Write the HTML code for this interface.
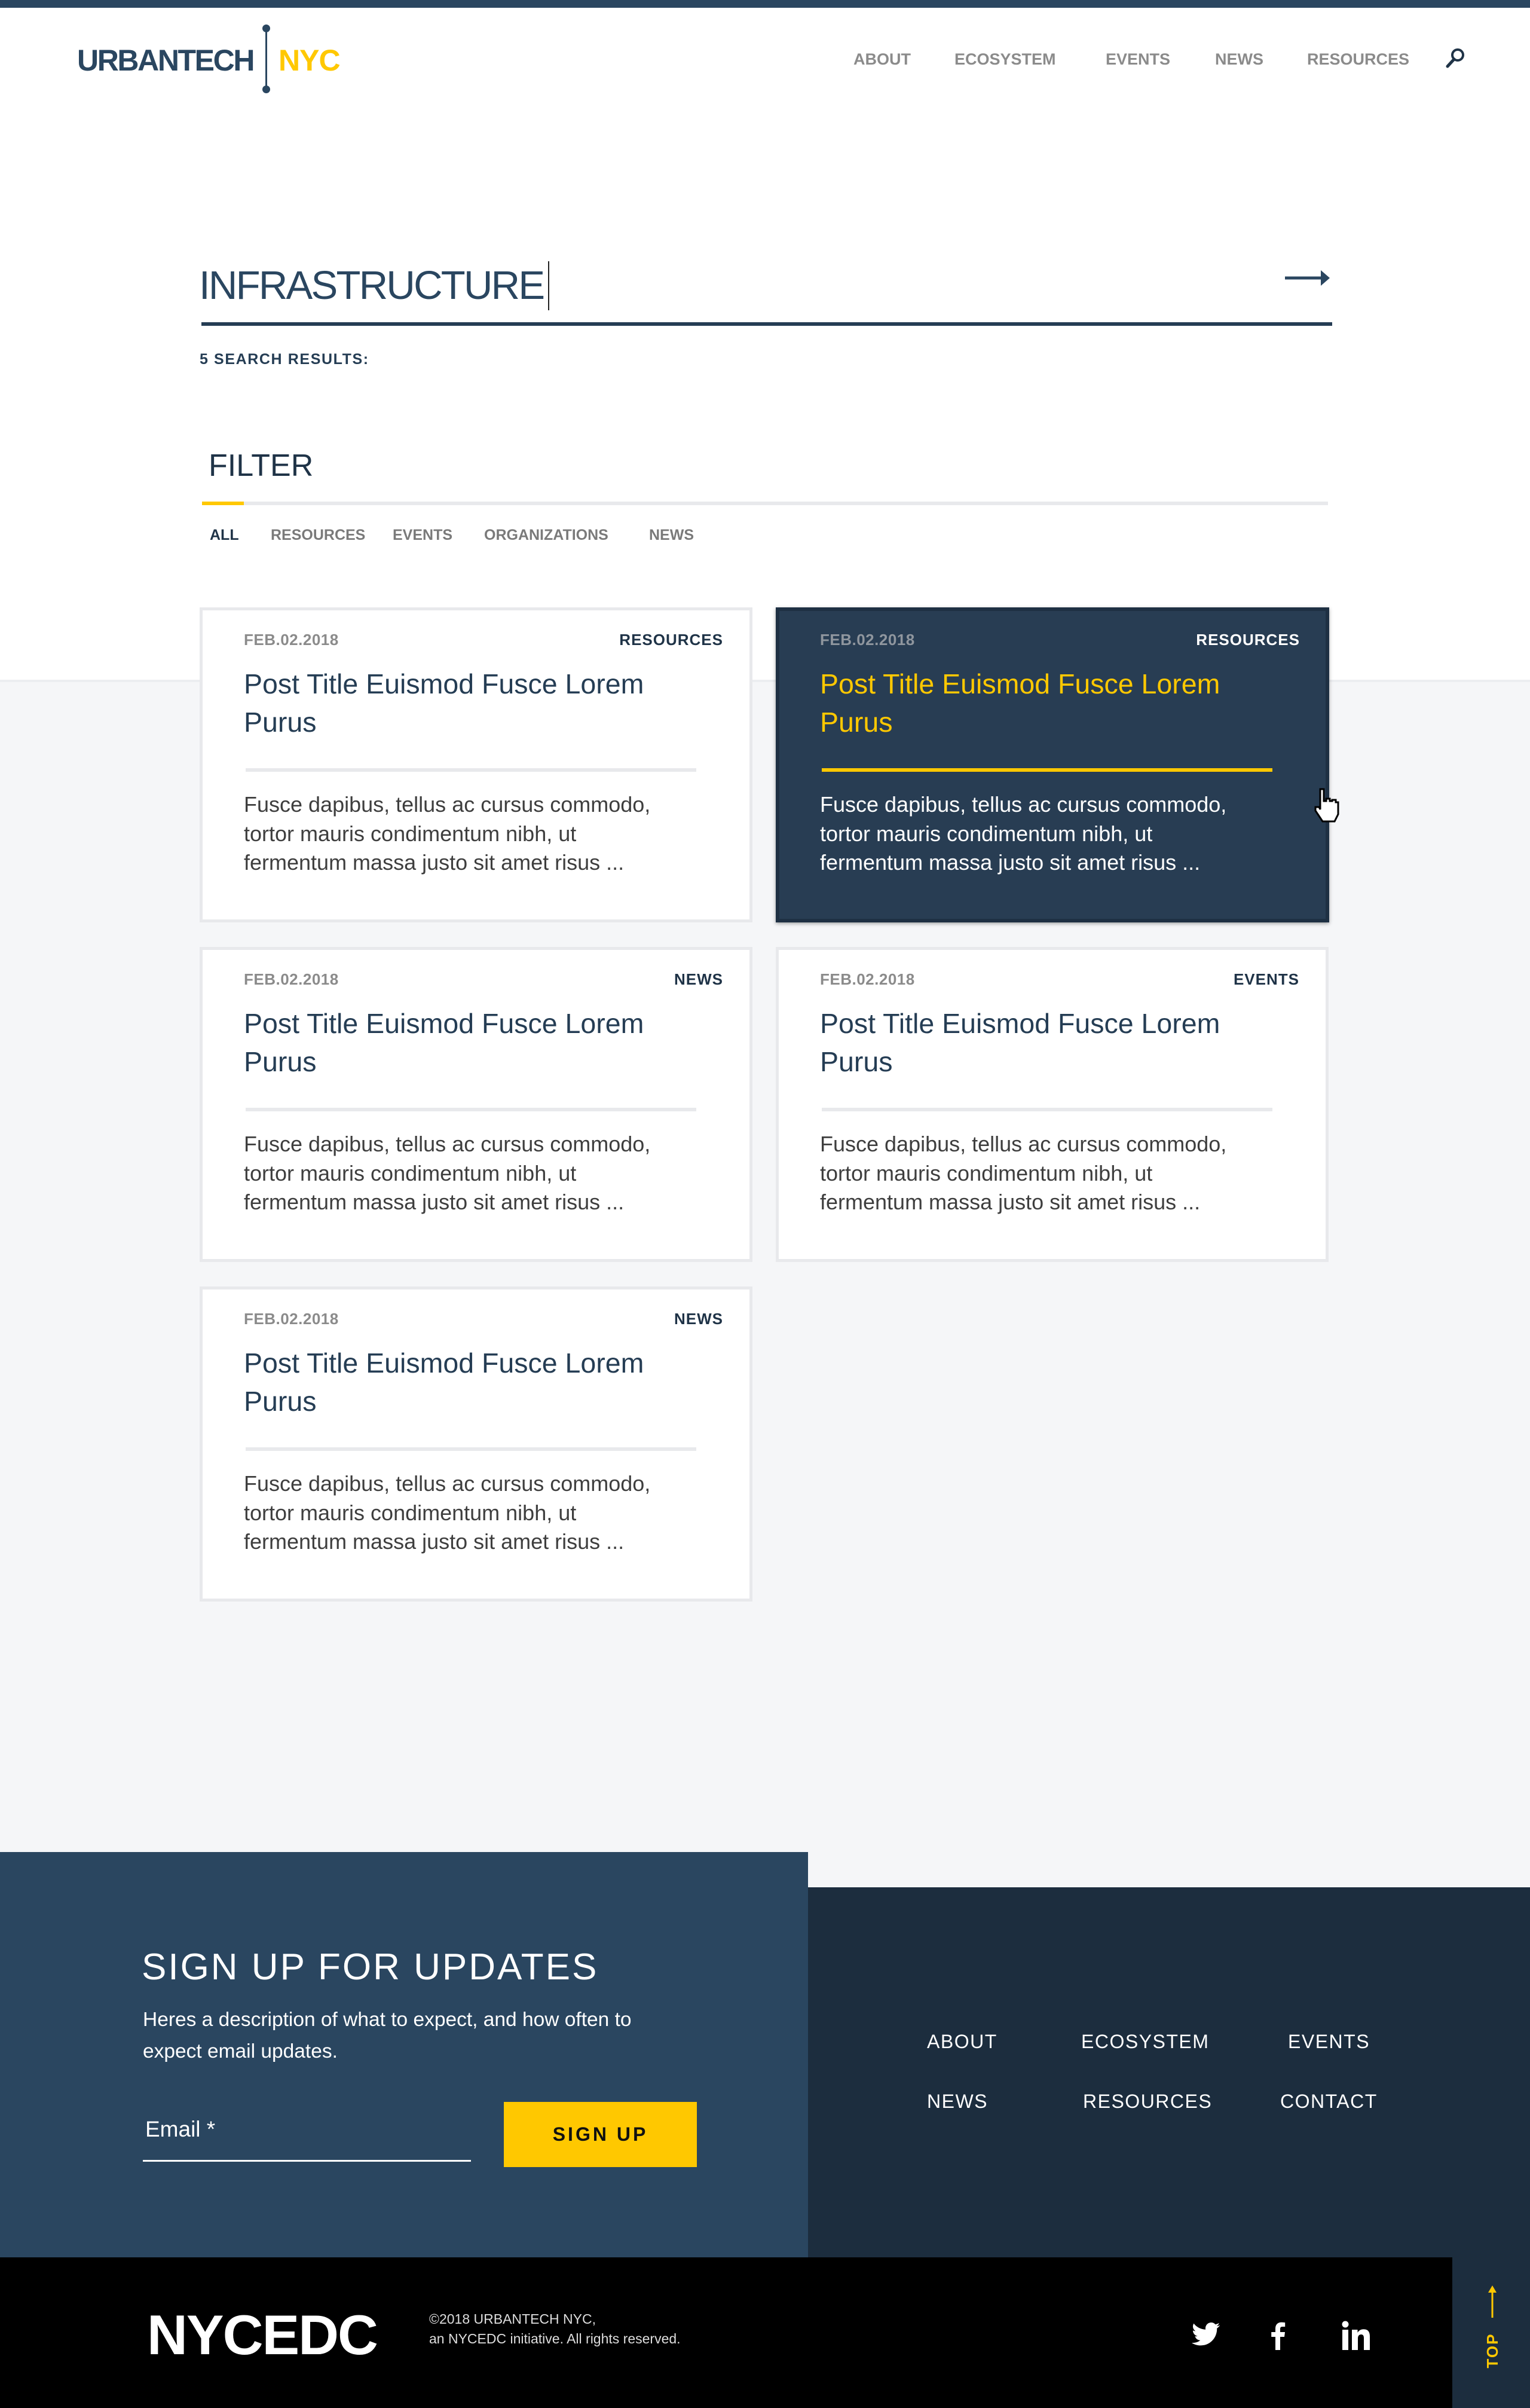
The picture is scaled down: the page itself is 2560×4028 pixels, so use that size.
<!DOCTYPE html>
<html><head><meta charset="utf-8">
<style>
*{margin:0;padding:0;box-sizing:border-box}
html,body{width:2560px;height:4028px;overflow:hidden}
body{position:relative;background:#fff;font-family:"Liberation Sans",Arial,sans-serif;color:#253d54}
.a{position:absolute;white-space:nowrap}
.nav{font-size:27px;font-weight:bold;color:#8b8b8b;top:84px}
.tab{font-size:25px;font-weight:bold;color:#7a7a7a;top:881px}
.card{position:absolute;width:925px;height:527px;background:#fff;border:5px solid #e8e9ec}
.card .d{position:absolute;left:69px;top:34px;font-size:26px;font-weight:bold;color:#8b8b8b;letter-spacing:0.5px}
.card .c{position:absolute;right:44px;top:34px;font-size:26px;font-weight:bold;color:#1f3347;letter-spacing:1px}
.card .t{position:absolute;left:69px;top:91px;font-size:46.5px;line-height:64px;color:#253d54;white-space:nowrap}
.card .l{position:absolute;left:72px;top:264px;width:754px;height:6px;background:#e8e9ec}
.card .b{position:absolute;left:69px;top:301px;font-size:36px;line-height:48.5px;color:#3e3e3e;white-space:nowrap}
.card.dk{background:#283d53;border:6px solid #1e3043;box-shadow:0 2px 6px rgba(0,0,0,.35)}
.card.dk .d{color:#8f969e}
.card.dk .c{color:#fff}
.card.dk .t{color:#ffc800}
.card.dk .l{background:#ffc800}
.card.dk .b{color:#fff}
.fl{font-size:32px;color:#fff;letter-spacing:1.5px}
</style></head><body>
<div class="a" style="left:0;top:0;width:2560px;height:13px;background:#2a4660"></div>
<!-- logo -->
<div class="a" style="left:129px;top:72px;font-size:50px;font-weight:bold;color:#2a4660;letter-spacing:-2.4px">URBANTECH</div>
<div class="a" style="left:444px;top:46px;width:3px;height:106px;background:#2a4660"></div>
<div class="a" style="left:439px;top:41px;width:13px;height:13px;border-radius:50%;background:#2a4660"></div>
<div class="a" style="left:439px;top:143px;width:13px;height:13px;border-radius:50%;background:#2a4660"></div>
<div class="a" style="left:466px;top:72px;font-size:50px;font-weight:bold;color:#ffc800;letter-spacing:-1px">NYC</div>
<!-- nav -->
<div class="a nav" style="left:1428px">ABOUT</div>
<div class="a nav" style="left:1597px">ECOSYSTEM</div>
<div class="a nav" style="left:1850px">EVENTS</div>
<div class="a nav" style="left:2033px">NEWS</div>
<div class="a nav" style="left:2187px">RESOURCES</div>
<svg class="a" style="left:2416px;top:78px" width="38" height="36" viewBox="0 0 38 36"><circle cx="23" cy="14" r="9" fill="none" stroke="#1f3347" stroke-width="4"/><line x1="17" y1="21" x2="6" y2="33" stroke="#1f3347" stroke-width="5" stroke-linecap="round"/></svg>
<!-- search -->
<div class="a" style="left:333px;top:439px;font-size:67px;color:#2a4660;letter-spacing:-2.7px">INFRASTRUCTURE</div>
<div class="a" style="left:917px;top:437px;width:2px;height:82px;background:#222"></div>
<svg class="a" style="left:2150px;top:450px" width="76" height="30" viewBox="0 0 76 30"><line x1="0" y1="15" x2="66" y2="15" stroke="#2a4660" stroke-width="5"/><path d="M60 2 L75 15 L60 28 Z" fill="#2a4660"/></svg>
<div class="a" style="left:337px;top:539px;width:1892px;height:6px;background:#253d54"></div>
<div class="a" style="left:334px;top:587px;font-size:25px;font-weight:bold;color:#253d54;letter-spacing:1.6px">5 SEARCH RESULTS:</div>
<!-- filter -->
<div class="a" style="left:349px;top:749px;font-size:52px;color:#1f3347">FILTER</div>
<div class="a" style="left:338px;top:839px;width:1884px;height:6px;background:#e8e9ec"></div>
<div class="a" style="left:338px;top:839px;width:70px;height:6px;background:#ffc800"></div>
<div class="a tab" style="left:351px;color:#1f3347">ALL</div>
<div class="a tab" style="left:453px">RESOURCES</div>
<div class="a tab" style="left:657px">EVENTS</div>
<div class="a tab" style="left:810px">ORGANIZATIONS</div>
<div class="a tab" style="left:1086px">NEWS</div>
<!-- gray bg -->
<div class="a" style="left:0;top:1137px;width:2560px;height:1961px;background:#f5f6f8;border-top:4px solid #eceef1"></div>
<div class="a" style="left:1352px;top:3098px;width:1208px;height:59px;background:#f5f6f8"></div>
<!-- cards -->
<div class="card" style="left:334px;top:1016px"><div class="d">FEB.02.2018</div><div class="c">RESOURCES</div><div class="t">Post Title Euismod Fusce Lorem<br>Purus</div><div class="l"></div><div class="b">Fusce dapibus, tellus ac cursus commodo,<br>tortor mauris condimentum nibh, ut<br>fermentum massa justo sit amet risus ...</div></div>
<div class="card dk" style="left:1298px;top:1016px;width:926px"><div class="d" style="left:68px;top:33px">FEB.02.2018</div><div class="c" style="right:43px;top:33px">RESOURCES</div><div class="t" style="left:68px;top:90px">Post Title Euismod Fusce Lorem<br>Purus</div><div class="l" style="left:71px;top:263px"></div><div class="b" style="left:68px;top:300px">Fusce dapibus, tellus ac cursus commodo,<br>tortor mauris condimentum nibh, ut<br>fermentum massa justo sit amet risus ...</div></div>
<div class="card" style="left:334px;top:1584px"><div class="d">FEB.02.2018</div><div class="c">NEWS</div><div class="t">Post Title Euismod Fusce Lorem<br>Purus</div><div class="l"></div><div class="b">Fusce dapibus, tellus ac cursus commodo,<br>tortor mauris condimentum nibh, ut<br>fermentum massa justo sit amet risus ...</div></div>
<div class="card" style="left:1298px;top:1584px"><div class="d">FEB.02.2018</div><div class="c">EVENTS</div><div class="t">Post Title Euismod Fusce Lorem<br>Purus</div><div class="l"></div><div class="b">Fusce dapibus, tellus ac cursus commodo,<br>tortor mauris condimentum nibh, ut<br>fermentum massa justo sit amet risus ...</div></div>
<div class="card" style="left:334px;top:2152px"><div class="d">FEB.02.2018</div><div class="c">NEWS</div><div class="t">Post Title Euismod Fusce Lorem<br>Purus</div><div class="l"></div><div class="b">Fusce dapibus, tellus ac cursus commodo,<br>tortor mauris condimentum nibh, ut<br>fermentum massa justo sit amet risus ...</div></div>
<!-- cursor -->
<svg class="a" style="left:2195px;top:1318px" width="52" height="60" viewBox="0 0 26 30"><path d="M7 1 h3 v10 h2 v-2 h3 v2 h2 v-1 h3 v2 h2 v10 l-3 6 h-10 l-6 -9 v-3 h3 l1 2 v-17 z" fill="#fff" stroke="#000" stroke-width="1.5"/></svg>
<!-- footer -->
<div class="a" style="left:0;top:3098px;width:1352px;height:678px;background:#2a4660"></div>
<div class="a" style="left:1352px;top:3157px;width:1208px;height:620px;background:#1c2d3e"></div>
<div class="a" style="left:237px;top:3255px;font-size:62px;color:#fff;letter-spacing:3px;font-weight:300">SIGN UP FOR UPDATES</div>
<div class="a" style="left:239px;top:3352px;font-size:33.5px;line-height:53px;color:#fff">Heres a description of what to expect, and how often to<br>expect email updates.</div>
<div class="a" style="left:243px;top:3541px;font-size:37px;color:#fff">Email *</div>
<div class="a" style="left:239px;top:3613px;width:549px;height:3px;background:#fff"></div>
<div class="a" style="left:843px;top:3516px;width:323px;height:109px;background:#ffc800;font-size:32px;font-weight:bold;color:#111;letter-spacing:4px;text-align:center;line-height:109px">SIGN UP</div>
<div class="a fl" style="left:1551px;top:3397px">ABOUT</div>
<div class="a fl" style="left:1809px;top:3397px">ECOSYSTEM</div>
<div class="a fl" style="left:2155px;top:3397px">EVENTS</div>
<div class="a fl" style="left:1551px;top:3497px">NEWS</div>
<div class="a fl" style="left:1812px;top:3497px">RESOURCES</div>
<div class="a fl" style="left:2142px;top:3497px">CONTACT</div>
<div class="a" style="left:0;top:3776px;width:2430px;height:252px;background:#000"></div>
<div class="a" style="left:2430px;top:3776px;width:130px;height:252px;background:#1c2d3e"></div>
<div class="a" style="left:246px;top:3852px;font-size:94px;font-weight:900;color:#fff;letter-spacing:-2px">NYCEDC</div>
<div class="a" style="left:718px;top:3863px;font-size:23px;line-height:33px;color:#ddd">©2018 URBANTECH NYC,<br>an NYCEDC initiative. All rights reserved.</div>
<svg class="a" style="left:1994px;top:3884px" width="48" height="42" viewBox="0 0 24 20"><path d="M23.6 2.3c-.9.4-1.8.6-2.8.8 1-.6 1.8-1.6 2.1-2.7-.9.6-2 1-3.1 1.2C19 .6 17.7 0 16.3 0c-2.7 0-4.8 2.2-4.8 4.8 0 .4 0 .8.1 1.1C7.6 5.7 4 3.8 1.7.8c-.4.7-.7 1.6-.7 2.4 0 1.700.9 3.2 2.2 4-.8 0-1.5-.2-2.2-.6v.1c0 2.300 1.7 4.3 3.9 4.7-.4.1-.8.2-1.3.2-.3 0-.6 0-.9-.1.6 1.9 2.4 3.4 4.5 3.4-1.7 1.3-3.7 2.1-6 2.1H0c2.1 1.4 4.7 2.2 7.4 2.2 8.9 0 13.7-7.4 13.7-13.7v-.6c1-.7 1.8-1.5 2.5-2.5z" fill="#fff"/></svg>
<svg class="a" style="left:2124px;top:3881px" width="28" height="50" viewBox="0 0 14 25"><path d="M9 25V14h3.5l.5-4H9V7.5c0-1.2.3-2 2-2h2.1V2c-.4 0-1.6-.2-3-.2-3 0-5.1 1.8-5.1 5.2V10H1.6v4H5v11z" fill="#fff"/></svg>
<svg class="a" style="left:2245px;top:3882px" width="50" height="49" viewBox="0 0 50 49"><circle cx="6" cy="6" r="5.5" fill="#fff"/><rect x="1" y="15" width="10" height="34" fill="#fff"/><path d="M17 15h9.5v5c2-3.6 5.5-5.8 10-5.8 7.5 0 10.5 4.5 10.5 12V49H37V29c0-3.5-1-6-4.5-6-3.600 0-5.5 2.5-5.5 6.5V49H17z" fill="#fff"/></svg>
<svg class="a" style="left:2487px;top:3823px" width="20" height="54" viewBox="0 0 20 54"><path d="M10 0 L17 12 H3 Z" fill="#ffc800"/><rect x="8.5" y="10" width="3" height="44" fill="#ffc800"/></svg>
<div class="a" style="left:2467px;top:3917px;width:60px;font-size:26px;font-weight:bold;color:#ffc800;letter-spacing:2px;transform:rotate(-90deg);text-align:center;line-height:30px">TOP</div>
</body></html>
